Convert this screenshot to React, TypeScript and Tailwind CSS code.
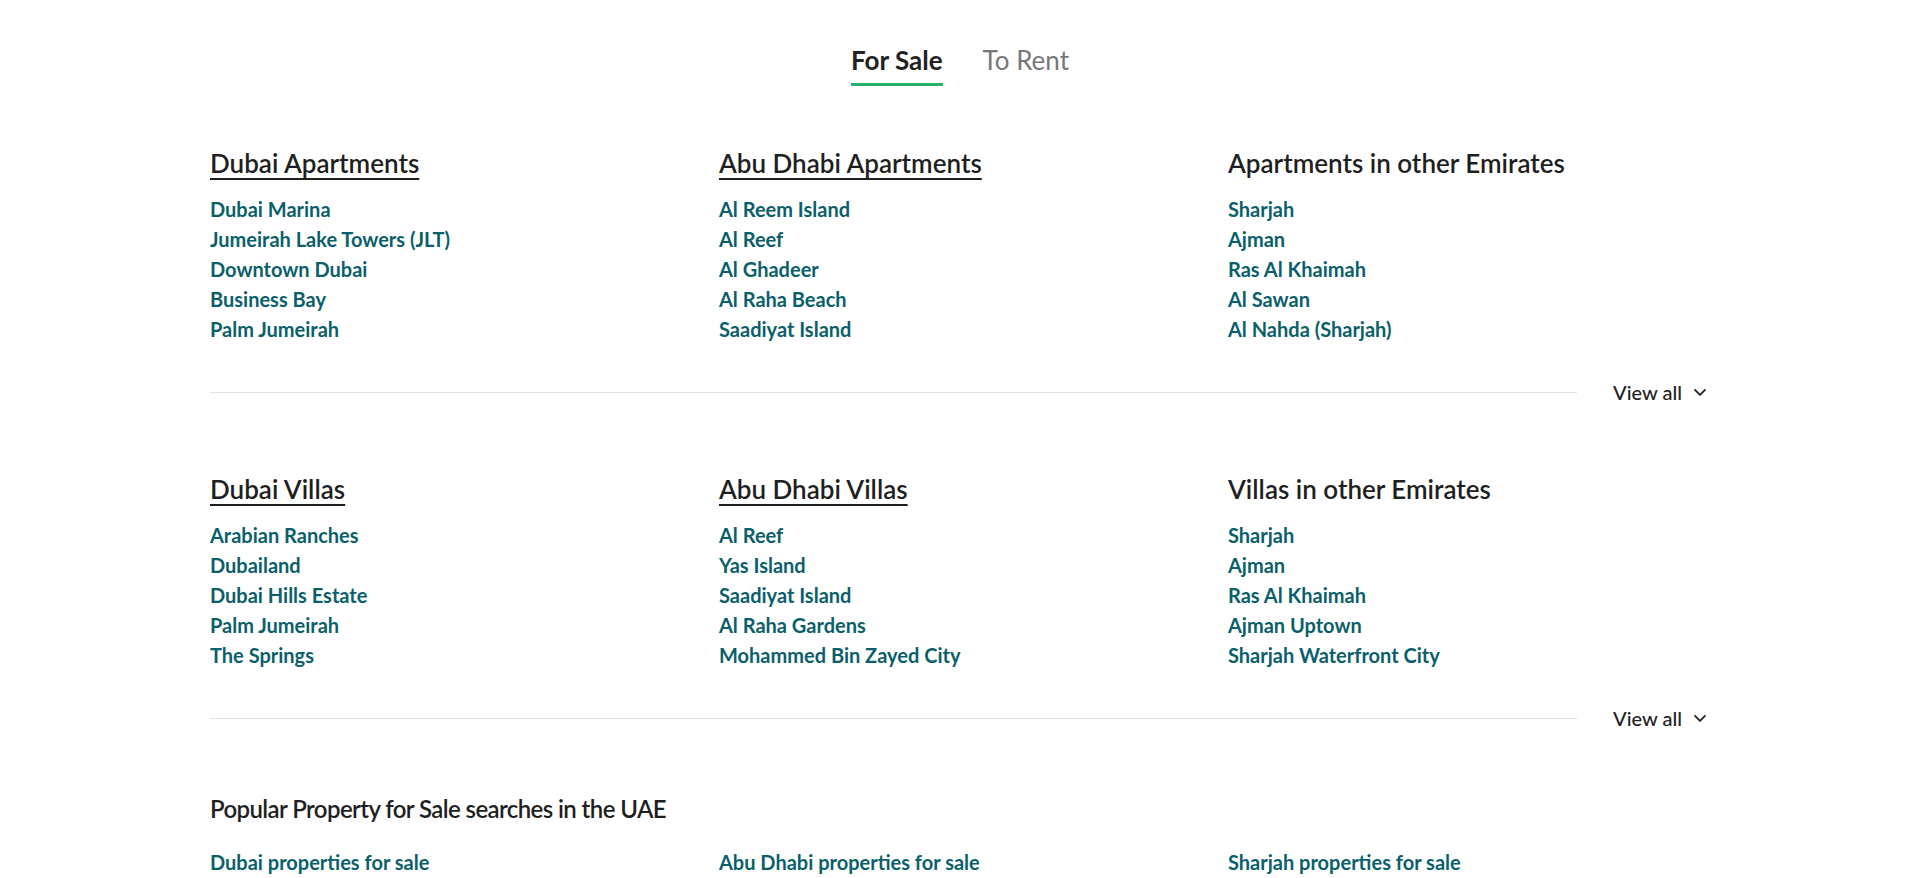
import React from "react";

type Col = { title: string; underline: boolean; links: string[] };

const sections: Col[][] = [
  [
    {
      title: "Dubai Apartments",
      underline: true,
      links: ["Dubai Marina", "Jumeirah Lake Towers (JLT)", "Downtown Dubai", "Business Bay", "Palm Jumeirah"],
    },
    {
      title: "Abu Dhabi Apartments",
      underline: true,
      links: ["Al Reem Island", "Al Reef", "Al Ghadeer", "Al Raha Beach", "Saadiyat Island"],
    },
    {
      title: "Apartments in other Emirates",
      underline: false,
      links: ["Sharjah", "Ajman", "Ras Al Khaimah", "Al Sawan", "Al Nahda (Sharjah)"],
    },
  ],
  [
    {
      title: "Dubai Villas",
      underline: true,
      links: ["Arabian Ranches", "Dubailand", "Dubai Hills Estate", "Palm Jumeirah", "The Springs"],
    },
    {
      title: "Abu Dhabi Villas",
      underline: true,
      links: ["Al Reef", "Yas Island", "Saadiyat Island", "Al Raha Gardens", "Mohammed Bin Zayed City"],
    },
    {
      title: "Villas in other Emirates",
      underline: false,
      links: ["Sharjah", "Ajman", "Ras Al Khaimah", "Ajman Uptown", "Sharjah Waterfront City"],
    },
  ],
];

function Chevron() {
  return (
    <svg width="20" height="20" viewBox="0 0 24 24" fill="none" stroke="#222" strokeWidth="2.2" strokeLinecap="round" strokeLinejoin="round">
      <path d="M6 9.5l6 6 6-6" />
    </svg>
  );
}

function Section({ cols, mt }: { cols: Col[]; mt: string }) {
  return (
    <div className={mt}>
      <div className="flex">
        {cols.map((c) => (
          <div key={c.title} className="w-[509px] shrink-0">
            <h3
              className={`text-[26px] leading-[30px] font-semibold text-[#1f1f1f] ${
                c.underline ? "underline decoration-2 underline-offset-[5px]" : ""
              }`}
            >
              {c.title}
            </h3>
            <ul className="mt-4 flex flex-col">
              {c.links.map((l) => (
                <li key={l} className="text-[20px] leading-[30px] font-bold text-[#0b5f6b]">
                  {l}
                </li>
              ))}
            </ul>
          </div>
        ))}
      </div>
      <div className="mt-[36px] flex items-center h-6">
        <div className="h-px flex-1 bg-[#e2e2e2]" />
        <div className="ml-[36px] flex items-center gap-[8px]">
          <span className="text-[20px] font-medium text-[#222] leading-6">View all</span>
          <Chevron />
        </div>
      </div>
    </div>
  );
}

export default function App() {
  return (
    <div className="min-h-screen bg-white font-['Lato','Noto_Sans',sans-serif]">
      <div className="mx-auto w-[1500px]">
        <div className="flex justify-center gap-10 pt-[45px]">
          <button className="border-b-[3px] border-[#27b26c] pb-[8px] text-[26px] leading-[30px] font-bold text-[#222]">
            For Sale
          </button>
          <button className="border-b-[3px] border-transparent pb-[8px] text-[26px] leading-[30px] font-normal text-[#777]">
            To Rent
          </button>
        </div>

        <Section cols={sections[0]} mt="mt-[62px]" />
        <Section cols={sections[1]} mt="mt-[70px]" />

        <div className="mt-[64px]">
          <h3 className="text-[24px] leading-[30px] font-semibold tracking-[-0.6px] text-[#1f1f1f]">
            Popular Property for Sale searches in the UAE
          </h3>
          <div className="mt-[23px] flex">
            {["Dubai properties for sale", "Abu Dhabi properties for sale", "Sharjah properties for sale"].map((l) => (
              <div key={l} className="w-[509px] shrink-0 text-[20px] leading-[30px] font-bold text-[#0b5f6b]">
                {l}
              </div>
            ))}
          </div>
        </div>
      </div>
    </div>
  );
}
